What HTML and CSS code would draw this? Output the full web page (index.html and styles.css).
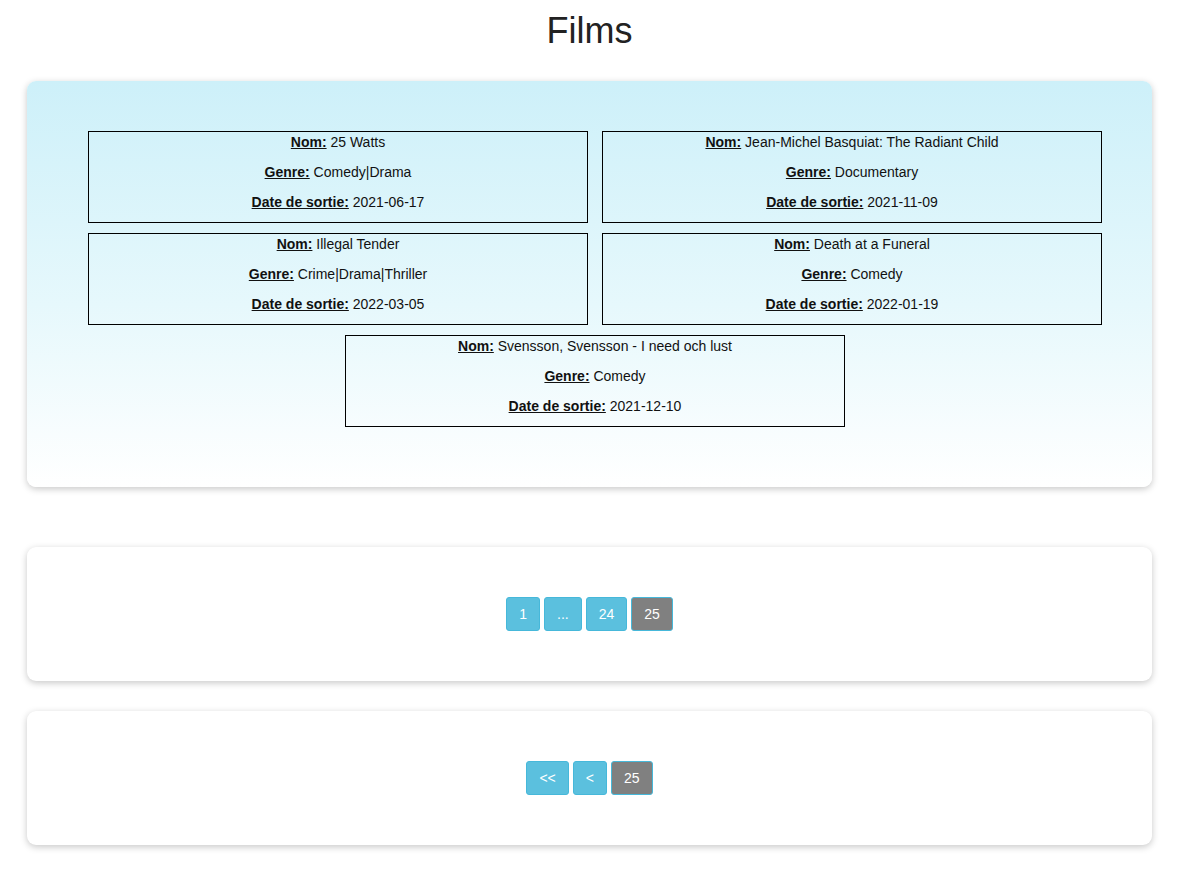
FILE: index.html
```html
<!DOCTYPE html>
<html lang="fr">
<head>
<meta charset="utf-8">
<title>Films</title>
<link rel="stylesheet" href="styles.css">
</head>
<body>
<div class="page">
  <h1 class="title">Films</h1>

  <section class="panel panel-films">
    <div class="films">
      <div class="film">
        <p><span class="lbl">Nom:</span> 25 Watts</p>
        <p><span class="lbl">Genre:</span> Comedy|Drama</p>
        <p><span class="lbl">Date de sortie:</span> 2021-06-17</p>
      </div>
      <div class="film">
        <p><span class="lbl">Nom:</span> Jean-Michel Basquiat: The Radiant Child</p>
        <p><span class="lbl">Genre:</span> Documentary</p>
        <p><span class="lbl">Date de sortie:</span> 2021-11-09</p>
      </div>
      <div class="film">
        <p><span class="lbl">Nom:</span> Illegal Tender</p>
        <p><span class="lbl">Genre:</span> Crime|Drama|Thriller</p>
        <p><span class="lbl">Date de sortie:</span> 2022-03-05</p>
      </div>
      <div class="film">
        <p><span class="lbl">Nom:</span> Death at a Funeral</p>
        <p><span class="lbl">Genre:</span> Comedy</p>
        <p><span class="lbl">Date de sortie:</span> 2022-01-19</p>
      </div>
      <div class="film">
        <p><span class="lbl">Nom:</span> Svensson, Svensson - I need och lust</p>
        <p><span class="lbl">Genre:</span> Comedy</p>
        <p><span class="lbl">Date de sortie:</span> 2021-12-10</p>
      </div>
    </div>
  </section>

  <section class="panel panel-pager panel-gap-lg">
    <nav class="pager">
      <span class="pg">1</span>
      <span class="pg">...</span>
      <span class="pg">24</span>
      <span class="pg active">25</span>
    </nav>
  </section>

  <section class="panel panel-pager panel-gap-sm">
    <nav class="pager">
      <span class="pg">&lt;&lt;</span>
      <span class="pg">&lt;</span>
      <span class="pg active">25</span>
    </nav>
  </section>
</div>
</body>
</html>
```

FILE: styles.css
```css
html, body {
  margin: 0;
  padding: 0;
  background: #ffffff;
}

body {
  font-family: "Liberation Sans", Arial, sans-serif;
  font-size: 14px;
  color: #222222;
}

.page {
  margin-left: 27px;
  width: 1125px;
  padding-bottom: 30px;
}

.title {
  margin: 0;
  padding-top: 10px;
  height: 81px;
  box-sizing: border-box;
  font-size: 36px;
  font-weight: normal;
  line-height: 41px;
  text-align: center;
  color: #222222;
}

.panel {
  border-radius: 9px;
  background: #ffffff;
  box-shadow: 0 2px 7px rgba(0, 0, 0, 0.22);
}

.panel-films {
  height: 406px;
  box-sizing: border-box;
  padding: 50px 49px 0 60px;
  background: linear-gradient(to bottom, #cdf0f9 0%, #e6f8fc 55%, #ffffff 100%);
}

.films {
  display: flex;
  flex-wrap: wrap;
  justify-content: center;
  gap: 10px 14px;
}

.film {
  width: 500px;
  box-sizing: border-box;
  border: 1px solid #000000;
  padding: 0 0 10px;
  text-align: center;
  color: #111111;
}

.film p {
  margin: 0 0 10px;
  line-height: 20px;
}

.film p:last-child {
  margin-bottom: 0;
}

.lbl {
  font-weight: bold;
  text-decoration: underline;
}

.panel-gap-lg {
  margin-top: 60px;
}

.panel-gap-sm {
  margin-top: 30px;
}

.panel-pager {
  height: 134px;
  box-sizing: border-box;
  padding-top: 50px;
}

.pager {
  display: flex;
  justify-content: center;
  gap: 4px;
}

.pg {
  display: block;
  padding: 6px 12px;
  line-height: 20px;
  font-size: 14px;
  color: #ffffff;
  background: #5bc0de;
  border: 1px solid #46b8da;
  border-radius: 3px;
  min-width: 8px;
  text-align: center;
}

.pg.active {
  background: #808080;
  border-color: #46b8da;
}
```
